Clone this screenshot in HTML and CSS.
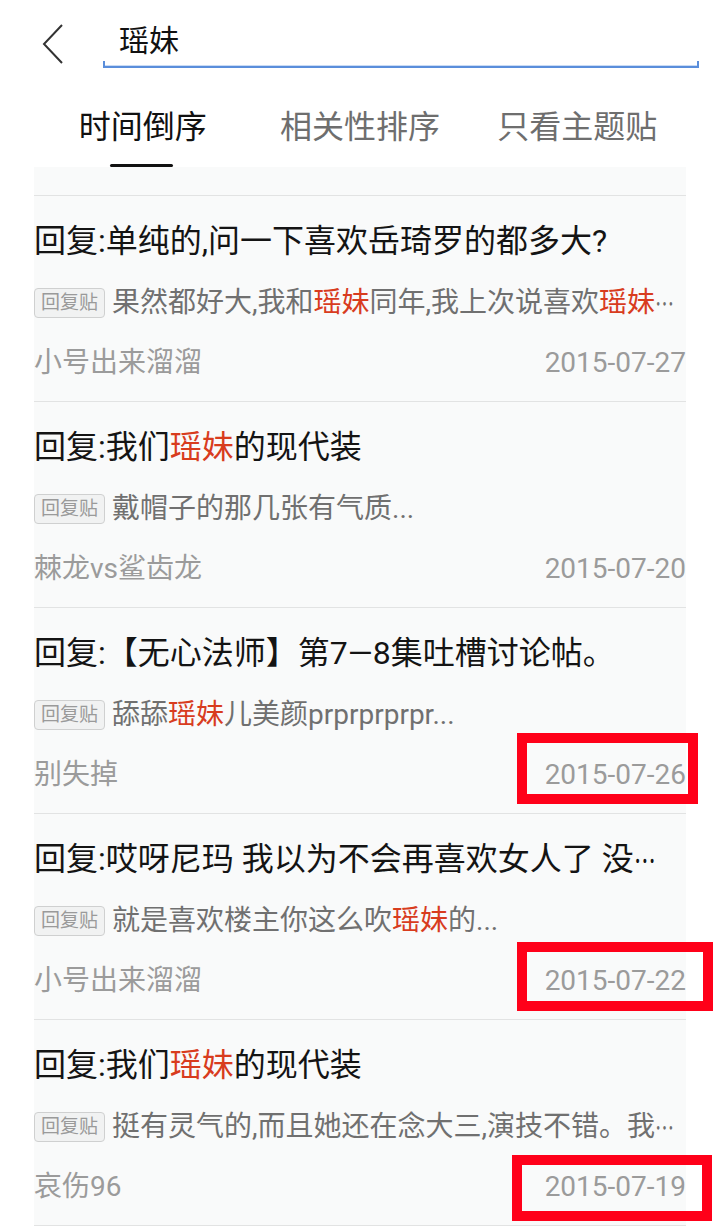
FILE: index.html
```html
<!DOCTYPE html>
<html lang="zh">
<head>
<meta charset="utf-8">
<title>瑶妹 - 搜索</title>
<link rel="stylesheet" href="styles.css">
</head>
<body>
<div class="page">
  <header class="top">
    <div class="back">
      <svg width="24" height="40" viewBox="0 0 24 40"><path d="M21 1 L3 20 L21 39" fill="none" stroke="#333" stroke-width="2"/></svg>
    </div>
    <div class="search">
      <div class="search-text">瑶妹</div>
      <div class="search-line"></div>
    </div>
  </header>

  <nav class="tabs">
    <div class="tab active"><span>时间倒序</span><i class="bar"></i></div>
    <div class="tab"><span>相关性排序</span></div>
    <div class="tab"><span>只看主题贴</span></div>
  </nav>

  <section class="list">
    <div class="stub"></div>
    <div class="item">
      <div class="title">回复:单纯的,问一下喜欢岳琦罗的都多大?</div>
      <div class="snippet"><span class="badge">回复贴</span><span class="txt">果然都好大,我和<em>瑶妹</em>同年,我上次说喜欢<em>瑶妹</em><span class="ell">…</span></span></div>
      <div class="meta"><span>小号出来溜溜</span><span>2015-07-27</span></div>
    </div>
    <div class="item">
      <div class="title">回复:我们<em>瑶妹</em>的现代装</div>
      <div class="snippet"><span class="badge">回复贴</span><span class="txt">戴帽子的那几张有气质...</span></div>
      <div class="meta"><span>棘龙vs鲨齿龙</span><span>2015-07-20</span></div>
    </div>
    <div class="item">
      <div class="title">回复:【无心法师】第7—8集吐槽讨论帖。</div>
      <div class="snippet"><span class="badge">回复贴</span><span class="txt">舔舔<em>瑶妹</em>儿美颜prprprprpr...</span></div>
      <div class="meta"><span>别失掉</span><span>2015-07-26</span></div>
    </div>
    <div class="item">
      <div class="title">回复:哎呀尼玛 我以为不会再喜欢女人了 没<span class="ell">…</span></div>
      <div class="snippet"><span class="badge">回复贴</span><span class="txt">就是喜欢楼主你这么吹<em>瑶妹</em>的...</span></div>
      <div class="meta"><span>小号出来溜溜</span><span>2015-07-22</span></div>
    </div>
    <div class="item">
      <div class="title">回复:我们<em>瑶妹</em>的现代装</div>
      <div class="snippet"><span class="badge">回复贴</span><span class="txt">挺有灵气的,而且她还在念大三,演技不错。我<span class="ell">…</span></span></div>
      <div class="meta"><span>哀伤96</span><span>2015-07-19</span></div>
    </div>
  </section>

  <div class="mark mark-1"></div>
  <div class="mark mark-2"></div>
  <div class="mark mark-3"></div>
</div>
</body>
</html>
```

FILE: styles.css
```css
html, body {
  margin: 0;
  padding: 0;
  background: #ffffff;
}
body {
  width: 718px;
  height: 1226px;
  overflow: hidden;
  font-family: Roboto, "Noto Sans CJK SC", sans-serif;
}
.page {
  position: relative;
  width: 718px;
  height: 1226px;
  overflow: hidden;
}

/* header */
.top {
  display: flex;
  align-items: flex-start;
  height: 70px;
}
.back {
  width: 24px;
  height: 40px;
  margin: 24px 0 0 41px;
}
.back svg { display: block; }
.search {
  margin-left: 38px;
  width: 596px;
  display: flex;
  flex-direction: column;
}
.search-text {
  font-size: 30px;
  line-height: 40px;
  height: 40px;
  margin-top: 21px;
  padding-left: 16px;
  color: #111;
}
.search-line {
  height: 5px;
  border: 2px solid #5a8edb;
  border-top: none;
  box-shadow: 0 -1px 0 #c9dbf5 inset;
}

/* tabs */
.tabs {
  display: flex;
  margin: 0 32px 0 34px;
  height: 97px;
}
.tab {
  flex: 1;
  display: flex;
  flex-direction: column;
  align-items: center;
  font-size: 32px;
  line-height: 40px;
  color: #6e6e6e;
  padding-top: 37px;
}
.tab.active { color: #111; }
.tab .bar {
  display: block;
  width: 63px;
  height: 4px;
  border-radius: 2px;
  background: #111;
  margin-top: 17px;
  margin-left: -2px;
}

/* list */
.list {
  margin: 0 32px 0 34px;
  background: #f9fafa;
  height: 1059px;
  overflow: hidden;
}
.stub {
  height: 28px;
  border-bottom: 1px solid #e2e3e3;
}
.item {
  padding: 25px 0 18px;
  border-bottom: 1px solid #e2e3e3;
}
.title {
  font-size: 32px;
  line-height: 40px;
  height: 40px;
  color: #141414;
  white-space: nowrap;
}
em {
  font-style: normal;
  color: #d83c1e;
}
.ell {
  font-family: "Noto Sans CJK SC", sans-serif;
  display: inline-block;
  width: 1em;
  height: 40px;
  line-height: 40px;
  vertical-align: top;
  margin-right: -0.3em;
  transform: scaleX(0.68);
  transform-origin: 0 50%;
}
.snippet {
  margin-top: 22px;
  height: 40px;
  display: flex;
  align-items: center;
  white-space: nowrap;
}
.badge {
  flex: none;
  box-sizing: border-box;
  width: 71px;
  height: 30px;
  line-height: 28px;
  text-align: center;
  font-size: 19px;
  color: #9a9a9a;
  background: #f1f2f2;
  border: 1px solid #cfd0d0;
  border-radius: 4px;
  margin-right: 7px;
}
.txt {
  font-size: 28px;
  line-height: 40px;
  color: #707070;
}
.meta {
  margin-top: 20px;
  height: 40px;
  display: flex;
  justify-content: space-between;
  font-size: 28px;
  line-height: 40px;
  color: #9b9b9b;
}

/* red annotation boxes lying over the list */
.mark {
  position: absolute;
  box-sizing: border-box;
  border: 10px solid #ff0019;
}
.mark-1 { left: 517px; top: 733px; width: 181px; height: 71px; }
.mark-2 { left: 517px; top: 942px; width: 196px; height: 69px; }
.mark-3 { left: 512px; top: 1155px; width: 200px; height: 66px; }
```
